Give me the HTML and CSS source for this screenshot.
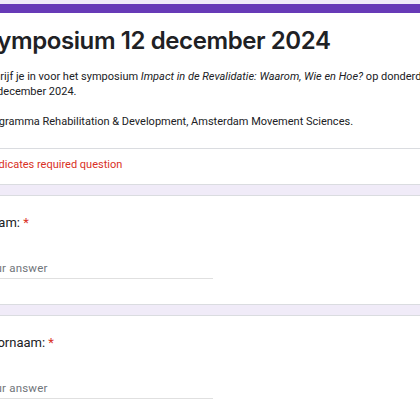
FILE: index.html
```html
<!DOCTYPE html>
<html lang="nl">
<head>
<meta charset="utf-8">
<title>Symposium 12 december 2024</title>
<link rel="stylesheet" href="styles.css">
</head>
<body>
<div class="page">
  <div class="card header-card">
    <div class="header-main">
      <h1 class="title">Symposium 12 december 2024</h1>
      <p class="desc">Schrijf je in voor het symposium <i>Impact in de Revalidatie: Waarom, Wie en Hoe?</i> op donderdag<br>12 december 2024.</p>
      <p class="desc">Programma Rehabilitation &amp; Development, Amsterdam Movement Sciences.</p>
    </div>
    <div class="required">* Indicates required question</div>
  </div>
  <div class="card question">
    <div class="label">Naam: <span class="star">*</span></div>
    <div class="answer">Your answer</div>
  </div>
  <div class="card question">
    <div class="label">Voornaam: <span class="star">*</span></div>
    <div class="answer">Your answer</div>
  </div>
</div>
</body>
</html>
```

FILE: styles.css
```css
html, body {
  margin: 0;
  padding: 0;
}
body {
  background: #f0ebf8;
  font-family: Roboto, "Liberation Sans", sans-serif;
  color: #202124;
  overflow: hidden;
}
.page {
  margin-left: -43px;
  width: 640px;
  padding-top: 4px;
  display: flex;
  flex-direction: column;
  gap: 10px;
}
.card {
  background: #fff;
  border: 1px solid #dadce0;
  border-radius: 8px;
}
.header-card {
  border-top: 9px solid #673ab7;
}
.header-main {
  padding: 12px 24px 19px;
  border-bottom: 1px solid #dadce0;
}
.title {
  margin: 0 0 12px;
  font-family: Inter, Roboto, sans-serif;
  font-weight: 600;
  font-size: 24px;
  line-height: 32px;
  letter-spacing: -0.4px;
  color: #202124;
}
.desc {
  margin: 0;
  font-size: 11px;
  line-height: 15px;
  color: #202124;
}
.desc + .desc {
  margin-top: 15px;
}
.required {
  padding: 8px 24px 12px;
  font-size: 11px;
  line-height: 15px;
  color: #d93025;
}
.question {
  padding: 18px 24px 25px;
}
.label {
  font-size: 13px;
  line-height: 18px;
  color: #202124;
}
.star {
  color: #d93025;
}
.answer {
  margin-top: 28px;
  width: 231px;
  font-size: 11.5px;
  line-height: 16px;
  letter-spacing: 0.2px;
  color: #70757a;
  padding-bottom: 2px;
  border-bottom: 1px solid #e0e0e0;
}
```
